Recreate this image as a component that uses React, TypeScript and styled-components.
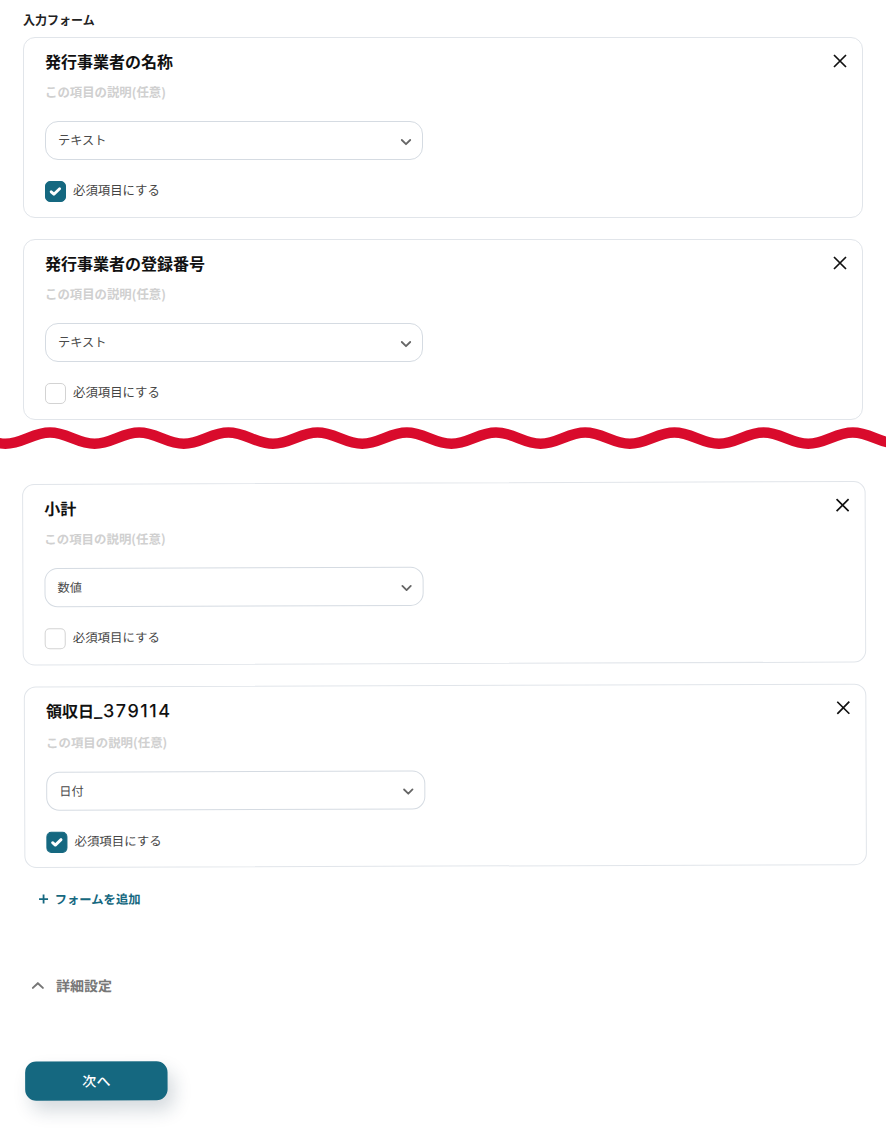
import React from "react";
import styled, { createGlobalStyle } from "styled-components";

const Global = createGlobalStyle`
  html, body { margin: 0; padding: 0; background: #fff; }
  body { font-family: "Noto Sans CJK JP", "Noto Sans", sans-serif; overflow-x: hidden; }
  * { box-sizing: border-box; }
`;

const Page = styled.div`
  width: 886px;
  height: 1128px;
  overflow: hidden;
  background: #fff;
  padding-top: 11px;
`;

const Section = styled.section`
  padding-left: 23px;
  width: 863px;
`;

const Heading = styled.h2`
  margin: 0 0 9px;
  font-size: 12px;
  line-height: 17px;
  font-weight: 700;
  color: #222;
`;

const CardList = styled.div`
  display: flex;
  flex-direction: column;
  gap: 21px;
`;

const Card = styled.div`
  position: relative;
  height: 181px;
  border: 1px solid #e1e5ea;
  border-radius: 12px;
  padding: 11px 21px 0;
  background: #fff;
`;

const Title = styled.div`
  font-size: 16px;
  line-height: 24px;
  font-weight: 700;
  color: #111;
`;

const TitleCode = styled.span`
  font-family: Inter, sans-serif;
  font-size: 18px;
  font-weight: 500;
  letter-spacing: 1.45px;
`;

const Description = styled.div`
  margin-top: 9px;
  font-size: 12.4px;
  line-height: 20px;
  font-weight: 700;
  color: #d0d0d0;
`;

const Select = styled.div`
  margin-top: 19px;
  width: 378px;
  height: 39px;
  border: 1px solid #d5dbe2;
  border-radius: 13px;
  display: flex;
  align-items: center;
  justify-content: space-between;
  padding: 0 9px 0 12px;
  font-size: 12.2px;
  color: #4a4a4a;
`;

const SelectValue = styled.span`
  margin-top: -2px;
`;

const Chevron = styled.svg`
  width: 14px;
  height: 14px;
  margin-top: 3px;
  color: #666;
`;

const CheckRow = styled.div`
  margin-top: 21px;
  display: flex;
  align-items: center;
  gap: 7px;
  font-size: 12.4px;
  line-height: 21px;
  color: #444;
`;

const CheckLabel = styled.span`
  margin-top: -2px;
`;

const Box = styled.span<{ $checked?: boolean }>`
  width: 21px;
  height: 21px;
  border-radius: 5px;
  display: flex;
  align-items: center;
  justify-content: center;
  border: 1px solid ${(p) => (p.$checked ? "#156880" : "#d3d3d3")};
  background: ${(p) => (p.$checked ? "#156880" : "#fff")};
`;

const Close = styled.svg`
  position: absolute;
  top: 16px;
  right: 15px;
  width: 14px;
  height: 14px;
  color: #111;
`;

const WaveSvg = styled.svg`
  display: block;
  margin-top: 6px;
  width: 886px;
  height: 24px;
`;

const Lower = styled.div`
  margin-top: 34px;
  padding-left: 22px;
  width: 863px;
  transform-origin: 0 0;
  transform: rotate(-0.2deg) scale(1.003);

  ${CardList} > :last-child {
    margin-left: 1px;
  }
`;

const AddForm = styled.div`
  margin-top: 22px;
  padding-left: 15px;
  display: flex;
  align-items: center;
  gap: 6px;
  font-size: 12.3px;
  line-height: 18px;
  font-weight: 700;
  color: #156880;
`;

const Details = styled.div`
  margin-top: 67px;
  padding-left: 7px;
  display: flex;
  align-items: center;
  gap: 11px;
  font-size: 14px;
  line-height: 20px;
  font-weight: 700;
  color: #777;
`;

const NextButton = styled.button`
  display: block;
  margin-top: 66px;
  margin-left: 1px;
  width: 142px;
  height: 39px;
  border: 0;
  border-radius: 11px;
  padding: 0 0 2px;
  background: #156880;
  color: #fff;
  font-family: inherit;
  font-size: 14px;
  font-weight: 500;
  box-shadow: 6px 10px 18px rgba(20, 50, 70, 0.18);
`;

const wavePath = () => {
  const h = 44.6;
  const top = 6.5;
  const bottom = 17.7;
  let x = 50 - 2 * h * 2;
  let y = top;
  let d = `M${x} ${y}`;
  while (x < 950) {
    const ny = y === top ? bottom : top;
    d += ` C${(x + h * 0.38).toFixed(1)} ${y} ${(x + h * 0.62).toFixed(1)} ${ny} ${(x + h).toFixed(1)} ${ny}`;
    x += h;
    y = ny;
  }
  return d;
};

const ChevronDown = () => (
  <Chevron viewBox="0 0 14 14" fill="none" stroke="currentColor" strokeWidth="1.8" strokeLinecap="round" strokeLinejoin="round">
    <path d="M2.8 5l4.2 4.2L11.2 5" />
  </Chevron>
);

type Field = { title: React.ReactNode; type: string; required: boolean };

const FieldCard = ({ title, type, required }: Field) => (
  <Card>
    <Title>{title}</Title>
    <Description>この項目の説明(任意)</Description>
    <Select>
      <SelectValue>{type}</SelectValue>
      <ChevronDown />
    </Select>
    <CheckRow>
      <Box $checked={required}>
        {required && (
          <svg width="13" height="11" viewBox="0 0 13 11" fill="none" stroke="#fff" strokeWidth="2.9" strokeLinecap="round" strokeLinejoin="round">
            <path d="M2.2 5.8l2.7 2.4L10.6 2.8" />
          </svg>
        )}
      </Box>
      <CheckLabel>必須項目にする</CheckLabel>
    </CheckRow>
    <Close viewBox="0 0 14 14" fill="none" stroke="currentColor" strokeWidth="1.7">
      <path d="M1 1l12 12M13 1L1 13" />
    </Close>
  </Card>
);

export default function App() {
  return (
    <Page>
      <Global />
      <Section>
        <Heading>入力フォーム</Heading>
        <CardList>
          <FieldCard title="発行事業者の名称" type="テキスト" required />
          <FieldCard title="発行事業者の登録番号" type="テキスト" required={false} />
        </CardList>
      </Section>
      <WaveSvg viewBox="0 0 886 24" fill="none">
        <path d={wavePath()} stroke="#d90b2c" strokeWidth="10.5" />
      </WaveSvg>
      <Lower>
        <CardList>
          <FieldCard title="小計" type="数値" required={false} />
          <FieldCard
            title={
              <>
                領収日<TitleCode>_379114</TitleCode>
              </>
            }
            type="日付"
            required
          />
        </CardList>
        <AddForm>
          <svg width="10" height="10" viewBox="0 0 10 10" stroke="currentColor" strokeWidth="1.8">
            <path d="M5 .5v9M.5 5h9" />
          </svg>
          フォームを追加
        </AddForm>
        <Details>
          <svg width="14" height="14" viewBox="0 0 14 14" fill="none" stroke="currentColor" strokeWidth="2" strokeLinecap="round" strokeLinejoin="round">
            <path d="M2 9.5L7 4.8l5 4.7" />
          </svg>
          詳細設定
        </Details>
        <NextButton>次へ</NextButton>
      </Lower>
    </Page>
  );
}
